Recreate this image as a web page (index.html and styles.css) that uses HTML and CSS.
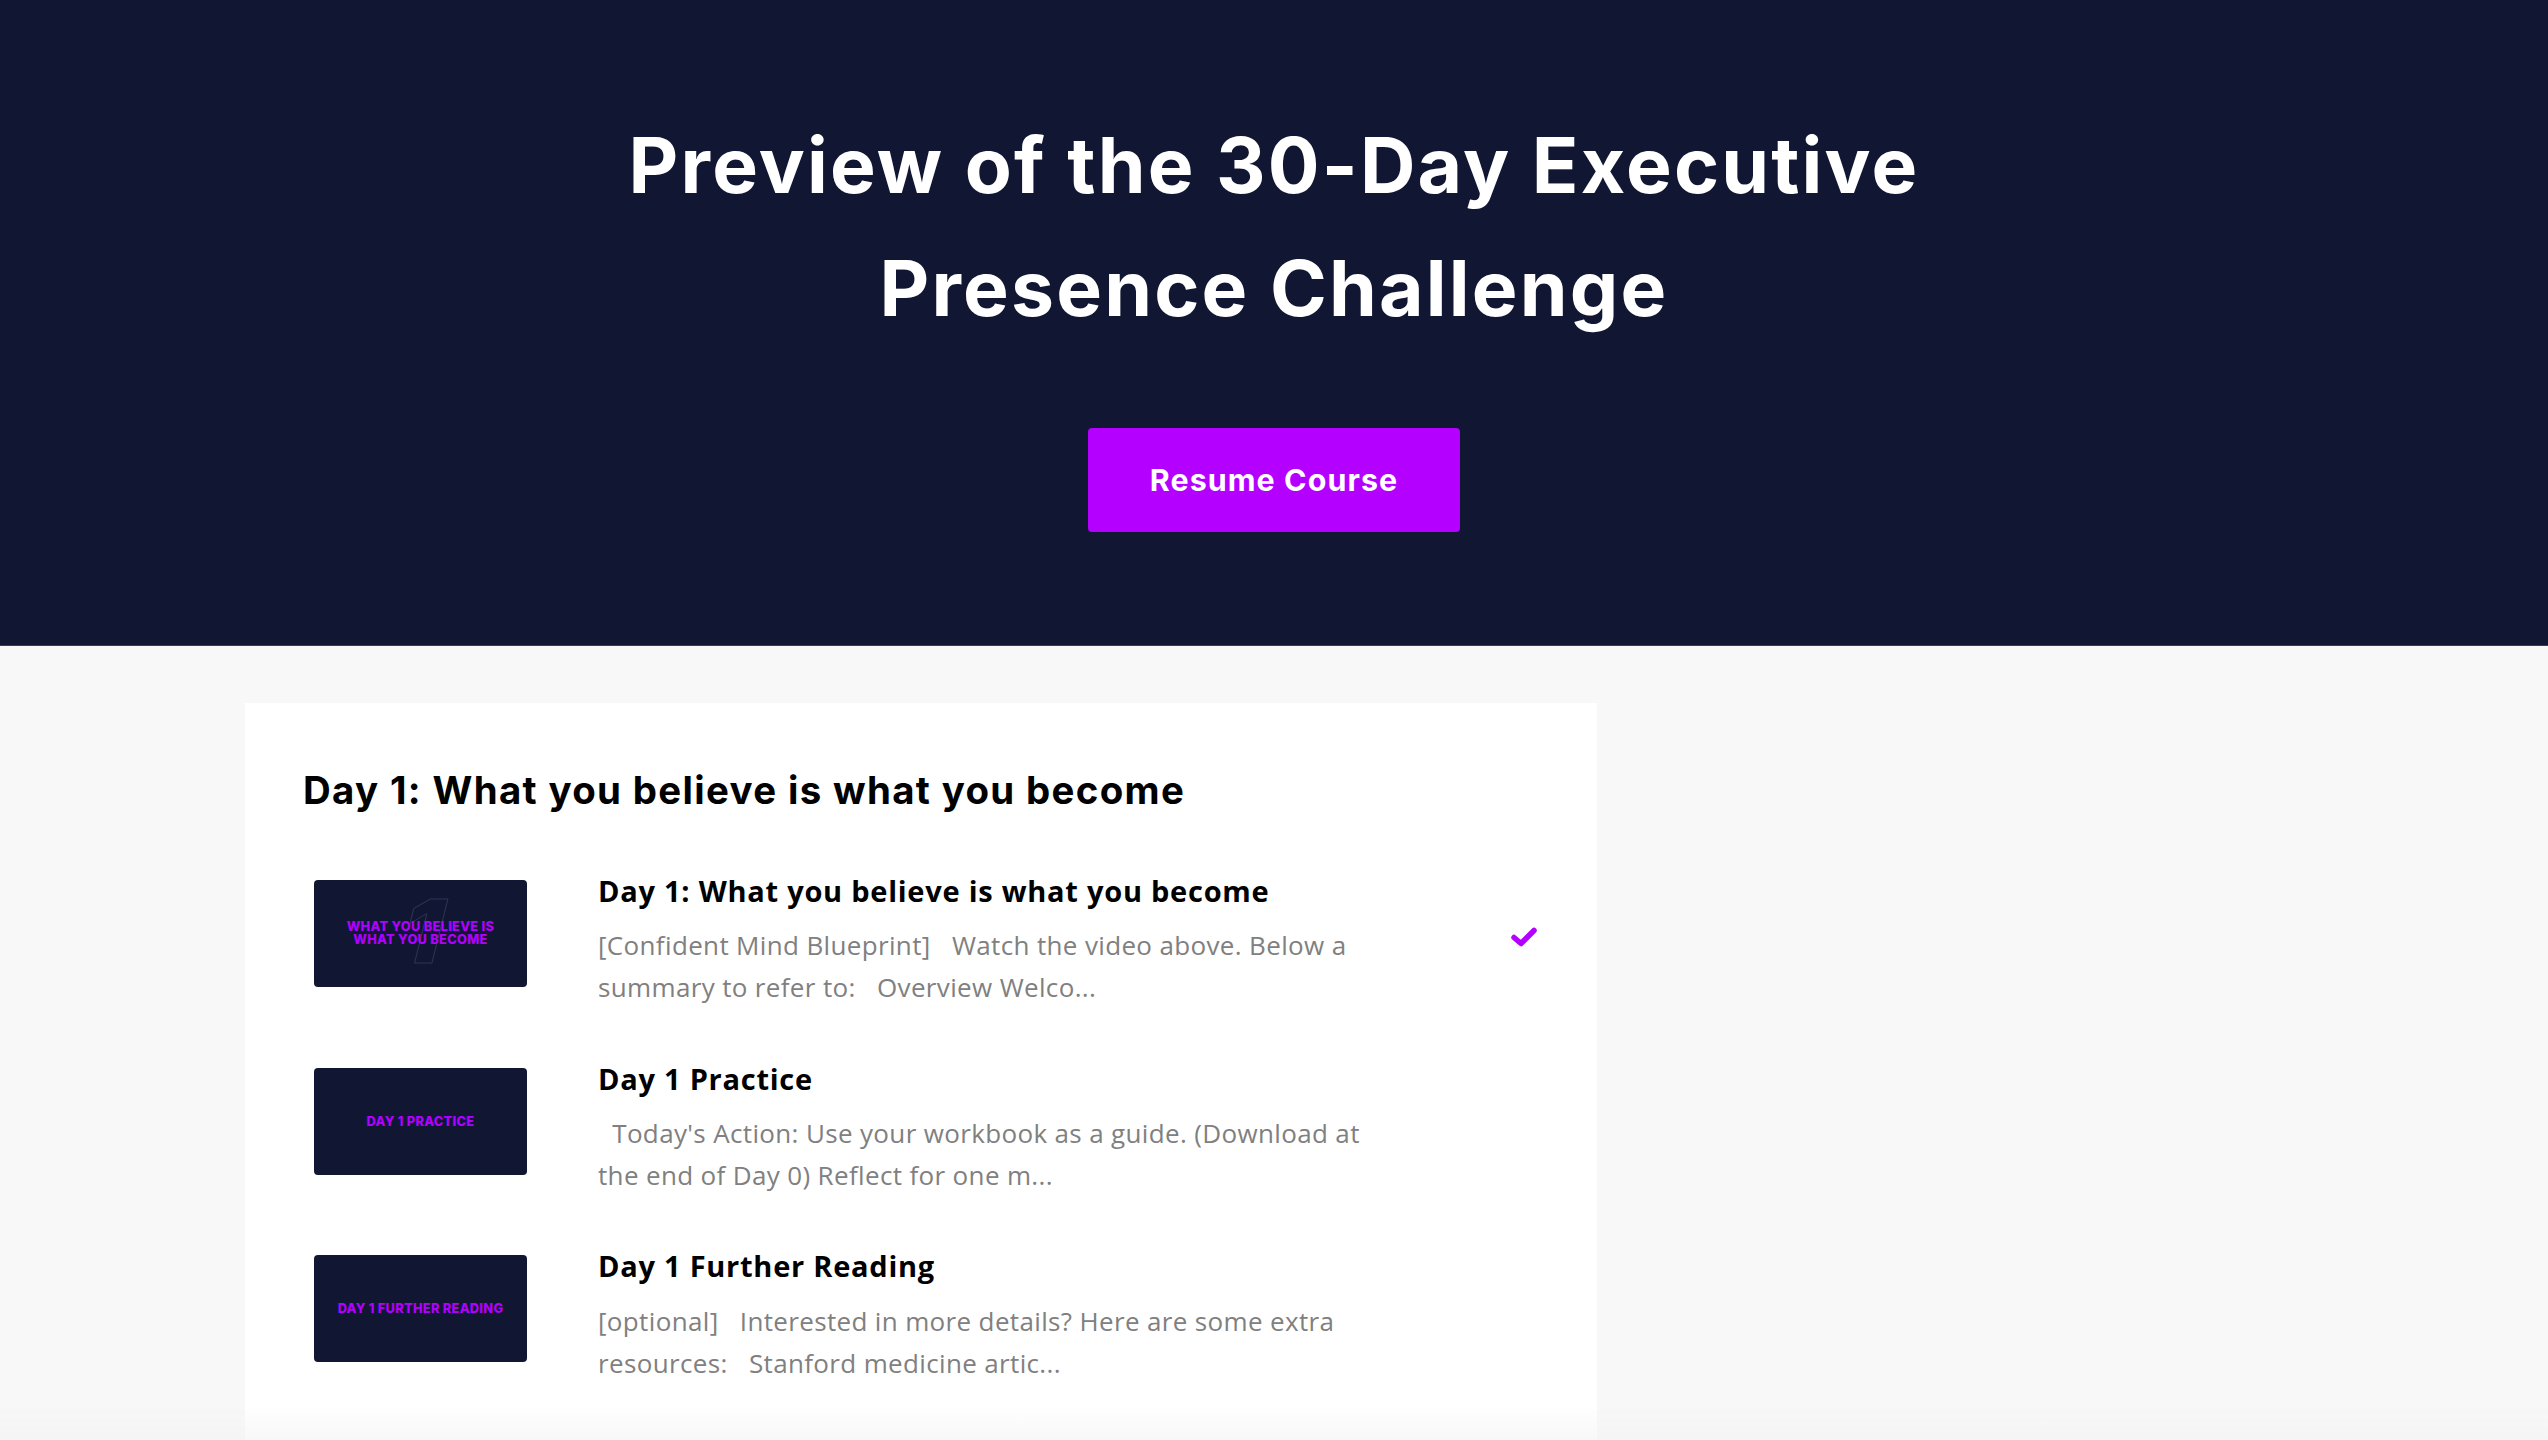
FILE: index.html
```html
<!DOCTYPE html>
<html lang="en">
<head>
<meta charset="utf-8">
<title>Preview of the 30-Day Executive Presence Challenge</title>
<link rel="stylesheet" href="styles.css">
</head>
<body>
<header class="hero">
  <h1 class="hero-title">Preview of the 30-Day Executive<br>Presence Challenge</h1>
  <a class="btn" href="#">Resume Course</a>
</header>
<main class="content">
  <div class="layout">
    <section class="card">
      <h2 class="section-title">Day 1: What you believe is what you become</h2>
      <ul class="posts">
        <li class="post">
          <div class="thumb">
            <span class="thumb-num">1</span>
            <span class="thumb-text">What you believe is<br>what you become</span>
          </div>
          <div class="post-body">
            <h3 class="post-title">Day 1: What you believe is what you become</h3>
            <p class="post-desc">[Confident Mind Blueprint]&nbsp;&nbsp; Watch the video above. Below a summary to refer to:&nbsp;&nbsp; Overview Welco...</p>
          </div>
          <div class="post-status">
            <svg class="check" viewBox="0 0 28 22" width="28" height="22" aria-hidden="true"><polyline points="4,11.5 11,17.5 24,4.5" fill="none" stroke="#b300ff" stroke-width="5.5" stroke-linecap="round" stroke-linejoin="round"/></svg>
          </div>
        </li>
        <li class="post">
          <div class="thumb">
            <span class="thumb-text">Day 1 Practice</span>
          </div>
          <div class="post-body">
            <h3 class="post-title">Day 1 Practice</h3>
            <p class="post-desc">&nbsp; Today's Action: Use your workbook as a guide. (Download at the end of Day 0) Reflect for one m...</p>
          </div>
        </li>
        <li class="post">
          <div class="thumb">
            <span class="thumb-text">Day 1 Further Reading</span>
          </div>
          <div class="post-body">
            <h3 class="post-title">Day 1 Further Reading</h3>
            <p class="post-desc">[optional]&nbsp;&nbsp; Interested in more details? Here are some extra resources:&nbsp;&nbsp; Stanford medicine artic...</p>
          </div>
        </li>
      </ul>
    </section>
  </div>
</main>
<div class="fade"></div>
</body>
</html>
```
FILE: styles.css
```css
* { box-sizing: border-box; }

html, body {
  margin: 0;
  padding: 0;
}

body {
  background: #f8f8f8;
  font-family: "Open Sans", "Liberation Sans", sans-serif;
  color: #000;
}

.hero {
  background: #111733;
  border-bottom: 1px solid #383d5a;
  padding: 105px 0 113px;
  display: flex;
  flex-direction: column;
  align-items: center;
  text-align: center;
}

.hero-title {
  margin: 0;
  font-family: "Inter", "Liberation Sans", sans-serif;
  font-weight: 700;
  font-size: 76.8px;
  letter-spacing: 2.2px;
  line-height: 1.6;
  color: #fff;
}

.btn {
  margin-top: 77px;
  width: 372px;
  height: 104px;
  display: flex;
  align-items: center;
  justify-content: center;
  background: #b300ff;
  color: #fff;
  border-radius: 4px;
  text-decoration: none;
  font-family: "Inter", "Liberation Sans", sans-serif;
  font-weight: 700;
  font-size: 30.4px;
  letter-spacing: 1.1px;
}

.content {
  padding: 57px 245px 0;
}

.layout {
  display: grid;
  grid-template-columns: 1352px 1fr;
}

.card {
  background: #fff;
  padding: 64px 59px 60px 58px;
}

.section-title {
  margin: 0 0 61px;
  font-family: "Inter", "Liberation Sans", sans-serif;
  font-weight: 700;
  font-size: 38.4px;
  letter-spacing: 1.35px;
  line-height: 1.2;
  color: #000;
}

.posts {
  list-style: none;
  margin: 0;
  padding: 0;
  display: flex;
  flex-direction: column;
  gap: 53px;
}

.post {
  display: flex;
  align-items: flex-start;
  padding-left: 11px;
}

.thumb {
  position: relative;
  flex: none;
  width: 213px;
  height: 107px;
  margin-top: 6px;
  margin-right: 71px;
  background: #111733;
  border-radius: 4px;
  overflow: hidden;
  display: flex;
  align-items: center;
  justify-content: center;
}

.thumb-num {
  position: absolute;
  left: 50%;
  top: 50%;
  transform: translate(-42%, -52%) skewX(-14deg);
  font-family: "Inter", "Liberation Sans", sans-serif;
  font-weight: 900;
  font-size: 88px;
  line-height: 1;
  color: transparent;
  -webkit-text-stroke: 1px #2e3556;
}

.thumb-text {
  position: relative;
  font-family: "Inter", "Liberation Sans", sans-serif;
  font-weight: 800;
  font-size: 12.8px;
  letter-spacing: 0.3px;
  line-height: 13px;
  text-transform: uppercase;
  text-align: center;
  color: #b000ff;
}

.post-body {
  width: 790px;
  flex: none;
}

.post-title {
  margin: 0 0 18px;
  font-family: "Open Sans", "Liberation Sans", sans-serif;
  font-weight: 700;
  font-size: 29px;
  letter-spacing: 0.75px;
  line-height: 1.16;
  color: #000;
}

.post-desc {
  margin: 0;
  font-size: 26px;
  letter-spacing: 0.35px;
  line-height: 1.6;
  color: #808080;
}

.post-status {
  margin-left: auto;
  align-self: center;
  display: flex;
  padding-bottom: 8px;
}

.fade {
  position: fixed;
  left: 0;
  right: 0;
  bottom: 0;
  height: 34px;
  pointer-events: none;
  background: linear-gradient(to bottom, rgba(245, 245, 245, 0), rgba(242, 242, 242, 0.55));
}
```
